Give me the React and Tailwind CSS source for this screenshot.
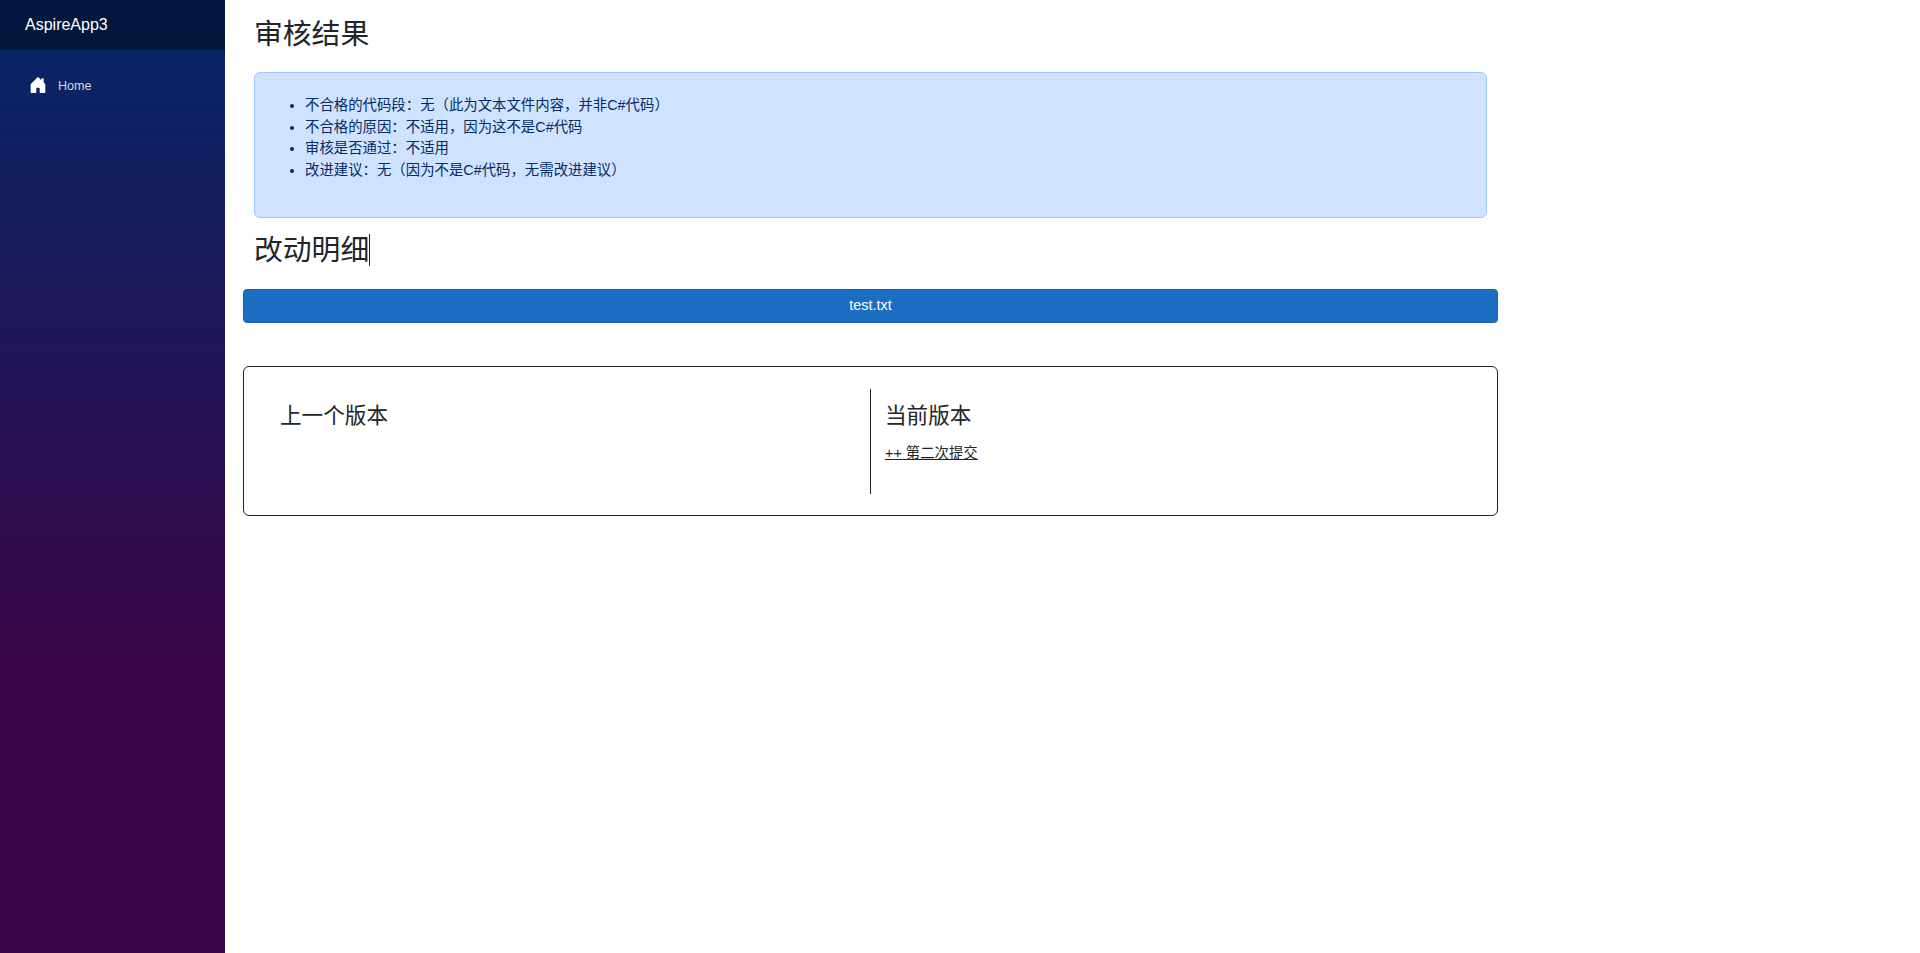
import React from 'react';
import { BsHouseDoorFill } from 'react-icons/bs';

const FONT = "font-['Liberation_Sans','Noto_Sans_CJK_SC',sans-serif]";

const reviewItems = [
    '不合格的代码段：无（此为文本文件内容，并非C#代码）',
    '不合格的原因：不适用，因为这不是C#代码',
    '审核是否通过：不适用',
    '改进建议：无（因为不是C#代码，无需改进建议）',
];

const Sidebar = () => (
    <aside className="w-[225px] shrink-0 min-h-[953px] bg-linear-to-b/srgb from-[#052767] to-[#3a0647] to-70%">
        <div className="h-[50px] bg-black/40 flex items-center pl-[25px] pb-[1px] text-base text-white">
            AspireApp3
        </div>
        <nav className="pt-[17px] pl-[29px]">
            <a className="flex items-center h-[40px] text-[12.6px] text-[#d7d7d7]">
                <BsHouseDoorFill className="text-white mr-[11px] -mt-[4px]" size={18} />
                Home
            </a>
        </nav>
    </aside>
);

const App = () => {
    return (
        <div className={`flex bg-white text-[14.4px] leading-[21.6px] text-[#212529] ${FONT}`}>
            <Sidebar />
            <main className="flex-1 pl-[18px]">
                <div className="w-[1255px]">
                    <h2 className="mx-[11px] pt-[17px] mb-[21px] text-[28.8px] leading-[34px] font-normal">审核结果</h2>

                    <div className="mx-[11px] h-[146px] pt-[22px] pl-[50px] bg-[#cfe2ff] border border-[#9ec5fe] rounded-md text-[#052c65]">
                        <ul className="list-disc">
                            {reviewItems.map(item => <li key={item}>{item}</li>)}
                        </ul>
                    </div>

                    <h2 className="mx-[11px] mt-[15px] -mb-[3px] text-[28.8px] leading-[34px] font-normal flex items-center">
                        改动明细
                        <span className="w-px h-[32px] bg-[#212529]" />
                    </h2>

                    <button className="block w-full h-[34px] mt-[25px] pb-[1px] bg-[#1b6ec2] border border-[#1861ac] rounded-[4px] text-white text-center">
                        test.txt
                    </button>

                    <div className="flex mt-[43px] h-[150px] px-[16px] pt-[22px] border border-[#212529] rounded-md">
                        <div className="w-[611px] h-[105px] pl-[20px] border-r border-[#212529]">
                            <h4 className="mt-[14px] text-[21.6px] leading-[25px] font-normal">上一个版本</h4>
                        </div>
                        <div className="flex-1 pl-[14px]">
                            <h4 className="mt-[14px] text-[21.6px] leading-[25px] font-normal">当前版本</h4>
                            <p className="mt-[15px] underline">++ 第二次提交</p>
                        </div>
                    </div>
                </div>
            </main>
        </div>
    );
};

export default App;
